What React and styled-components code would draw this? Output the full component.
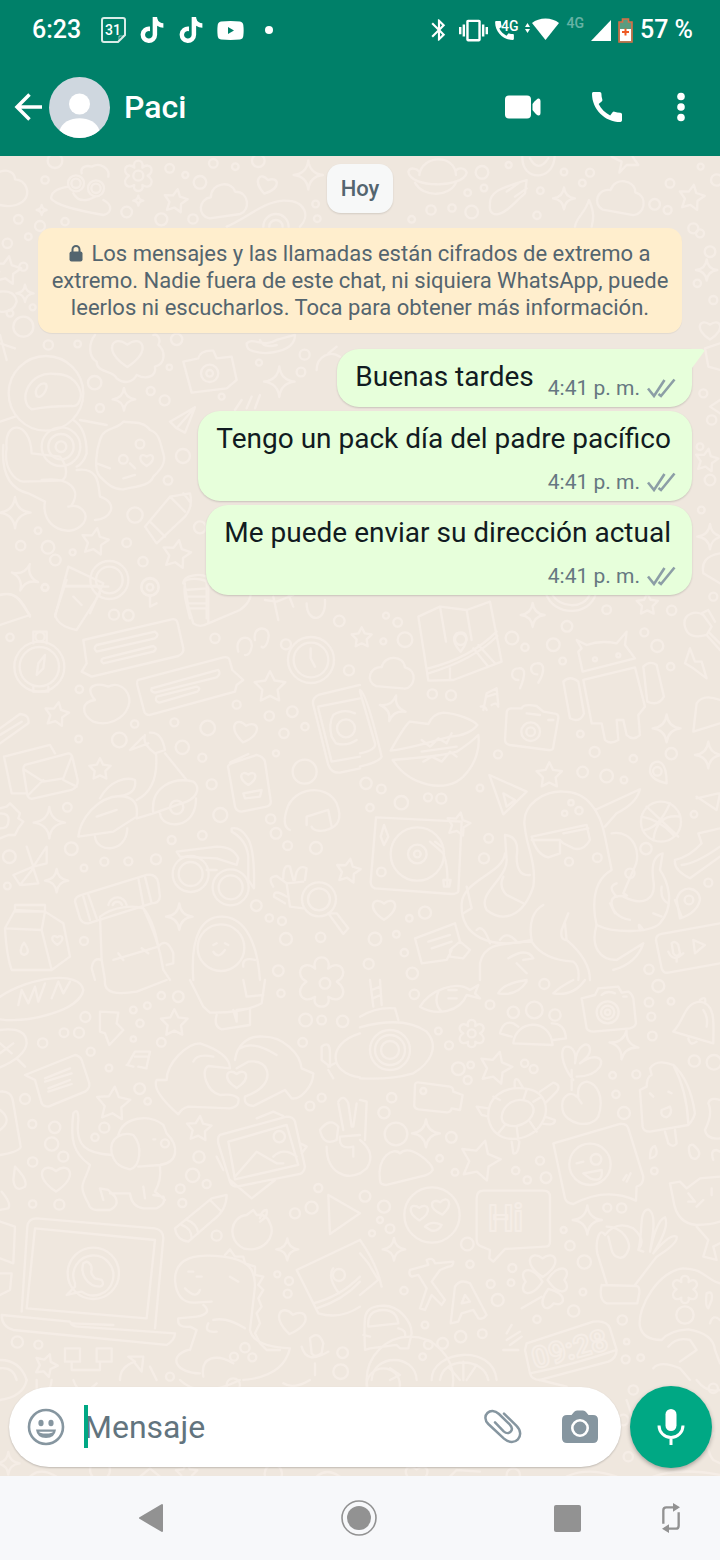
import React, { useState } from 'react';
import styled, { createGlobalStyle } from 'styled-components';
import { FaTiktok } from 'react-icons/fa6';
import { MdBluetooth, MdCall, MdVibration } from 'react-icons/md';

const GlobalStyle = createGlobalStyle`
  * {
    box-sizing: border-box;
  }

  body {
    margin: 0;
    font-family: Roboto, 'Noto Sans', sans-serif;
  }

  button {
    padding: 0;
    border: none;
    background: none;
    color: inherit;
    font: inherit;
    cursor: pointer;
  }

  svg {
    display: block;
    flex-shrink: 0;
  }
`;

const Screen = styled.div`
  display: flex;
  flex-direction: column;
  min-height: 100vh;
`;

const TopArea = styled.header`
  background-color: #008069;
  color: #fff;
`;

/* ---------- status bar ---------- */

const StatusBar = styled.div`
  display: flex;
  justify-content: space-between;
  align-items: center;
  height: 58px;
  padding: 2px 27px 0 32px;
`;

const StatusGroup = styled.div`
  display: flex;
  align-items: center;
  gap: ${({ $gap }) => $gap}px;
`;

const StatusText = styled.span`
  font-size: 25px;
  font-weight: 500;
  line-height: 30px;
`;

const Clock = styled(StatusText)`
  margin-right: 7px;
`;

const Network = styled.span`
  align-self: flex-start;
  font-size: 14px;
  font-weight: 500;
  line-height: 16px;
  opacity: ${({ $faded }) => ($faded ? 0.4 : 1)};
`;

const CallNetwork = styled.div`
  display: flex;
  margin-left: -3px;

  ${Network} {
    margin-left: -16px;
  }
`;

/* ---------- chat header ---------- */

const ChatHeader = styled.div`
  display: flex;
  align-items: center;
  height: 98px;
  padding: 0 7px 0 14px;
`;

const Contact = styled.button`
  display: flex;
  flex: 1;
  align-items: center;
  gap: 14px;
  margin-left: 7px;
`;

const Name = styled.h1`
  margin: 0;
  font-size: 32px;
  font-weight: 500;
  line-height: 40px;
`;

const Actions = styled.div`
  display: flex;
  align-items: center;
  gap: ${({ $gap }) => $gap || 0}px;
`;

const IconButton = styled.button`
  display: flex;
  justify-content: center;
  align-items: center;
  width: ${({ $width }) => $width || 48}px;
  height: 48px;
`;

/* ---------- conversation ---------- */

const ChatArea = styled.main`
  position: relative;
  display: flex;
  flex: 1;
  flex-direction: column;
  background-color: #efe7de;
  overflow: hidden;
`;

const WallpaperSvg = styled.svg`
  position: absolute;
  inset: 0;
  width: 100%;
  height: 100%;
`;

const Conversation = styled.section`
  position: relative;
  display: flex;
  flex: 1;
  flex-direction: column;
  align-items: center;
  padding: 8px 28px 0;
`;

const DateChip = styled.div`
  padding: 11px 14px 10px;
  border-radius: 14px;
  background-color: #f7f8f8;
  box-shadow: 0 1px 2px rgba(0, 0, 0, 0.12);
  color: #54656f;
  font-size: 22px;
  font-weight: 500;
  line-height: 28px;
`;

const Notice = styled.p`
  align-self: stretch;
  margin: 15px 10px 16px;
  padding: 12px 10px;
  border-radius: 14px;
  background-color: #ffeecd;
  box-shadow: 0 1px 1px rgba(0, 0, 0, 0.06);
  color: #54656f;
  font-size: 22px;
  line-height: 27px;
  text-align: center;
  white-space: nowrap;

  svg {
    display: inline-block;
    margin-right: 8px;
    vertical-align: -2px;
  }
`;

const Messages = styled.div`
  display: flex;
  flex-direction: column;
  align-items: flex-end;
  align-self: stretch;
  gap: 4px;
`;

const Bubble = styled.article`
  position: relative;
  display: flex;
  flex-direction: ${({ $stacked }) => ($stacked ? 'column' : 'row')};
  align-items: flex-end;
  gap: 8px;
  padding: 11px 15px 7px 18px;
  border-radius: 22px;
  border-top-right-radius: ${({ $tail }) => ($tail ? 0 : 22)}px;
  background-color: #e7ffdb;
  box-shadow: 0 1px 2px rgba(0, 0, 0, 0.16);
`;

const Tail = styled.svg`
  position: absolute;
  top: 0;
  left: 100%;
`;

const MessageText = styled.p`
  align-self: flex-start;
  margin: 0 6px 6px 0;
  color: #111b21;
  font-size: 28px;
  line-height: 34px;
`;

const Meta = styled.div`
  display: flex;
  align-items: center;
  gap: 7px;
  color: #667781;
  font-size: 21px;
  line-height: 24px;
`;

/* ---------- composer ---------- */

const Composer = styled.form`
  position: relative;
  display: flex;
  align-items: center;
  gap: 9px;
  padding: 0 8px 8px 9px;
`;

const Field = styled.div`
  display: flex;
  flex: 1;
  align-items: center;
  height: 80px;
  padding: 0 17px 0 13px;
  border-radius: 40px;
  background-color: #fff;
  box-shadow: 0 1px 2px rgba(0, 0, 0, 0.2);
  color: #8696a0;
`;

const InputWrap = styled.div`
  position: relative;
  flex: 1;
  min-width: 0;
  margin-left: 14px;
`;

const Input = styled.input`
  width: 100%;
  height: 44px;
  padding: 0;
  border: none;
  outline: none;
  background: none;
  color: #111b21;
  font-family: inherit;
  font-size: 32px;

  &::placeholder {
    color: #62747e;
    opacity: 1;
  }
`;

const Caret = styled.span`
  position: absolute;
  top: 0;
  left: 0;
  width: 4px;
  height: 43px;
  background-color: #00a884;
`;

const MicButton = styled.button`
  display: flex;
  justify-content: center;
  align-items: center;
  width: 82px;
  height: 82px;
  border-radius: 50%;
  background-color: #00a884;
  box-shadow: 0 2px 4px rgba(0, 0, 0, 0.3);
`;

/* ---------- navigation bar ---------- */

const NavBar = styled.nav`
  display: grid;
  grid-template-columns: 208fr 208fr 104fr 48px;
  align-items: center;
  height: 84px;
  padding: 0 25px 0 127px;
  background-color: #f7f8fa;
  color: #929292;
`;

/* ---------- wallpaper ---------- */

const STAR = 'M0 -10L3 -4L10 -3L5 2L6 9L0 6L-6 9L-5 2L-10 -3L-3 -4Z';
const SPARKLE = 'M0 -10Q1 -1 10 0Q1 1 0 10Q-1 1 -10 0Q-1 -1 0 -10Z';
const HEART = 'M0 9C-16 -1 -9 -12 0 -5C9 -12 16 -1 0 9Z';
const CLOUD = 'M-8 7C-14 5 -12 -3 -6 -3C-5 -10 5 -10 6 -4C13 -3 12 6 7 7Z';
const FLOWER = 'M-3 -6C-5 -13 5 -13 3 -6C9 -11 13 -3 7 0C13 4 9 11 3 7C5 13 -5 13 -3 7C-9 11 -13 4 -7 0C-13 -3 -9 -11 -3 -6Z';

// Every panel is drawn on a grid three times finer than the page.
const panels = [
  {
    x: 0,
    y: 150,
    circles: [[135, 90, 11], [55, 208, 13], [195, 215, 11], [380, 186, 16], [509, 55, 13], [600, 97, 19], [556, 75, 9], [640, 40, 13], [706, 50, 10], [775, 32, 19], [484, 208, 18], [579, 207, 14], [947, 162, 10], [952, 206, 10], [120, 228, 15], [165, 32, 22], [415, 77, 15], [228, 100, 14], [288, 115, 14], [228, 100, 24], [288, 115, 24]],
    shapes: [[STAR, 527, 152, 3.5, 10], [SPARKLE, 925, 75, 4.4], [HEART, 800, 105, 3, 15], [FLOWER, 415, 77, 4], [CLOUD, 672, 155, 6.2, -8], [SPARKLE, 125, 180, 1.5], [SPARKLE, 415, 152, 1.5]],
    paths: [
      'M0 65C25 55 45 70 45 88C78 90 95 130 68 155Q40 175 0 165',
      'M245 70C240 50 260 45 275 50C300 35 330 55 325 80M205 110C180 115 155 120 153 145C170 170 280 190 310 195C335 190 340 165 310 150M220 130Q240 165 285 140',
      'M680 230C740 205 790 155 850 152C920 150 930 200 900 230M790 230A38 38 0 1 1 866 230M808 230A20 20 0 1 1 848 230',
    ],
  },
  {
    x: 360,
    y: 150,
    circles: [[366, 67, 19], [372, 114, 10], [323, 128, 10], [213, 180, 14], [276, 174, 11], [335, 186, 19], [155, 208, 10], [612, 66, 10], [690, 68, 12], [667, 99, 10], [541, 122, 10], [531, 196, 11], [884, 163, 16], [923, 180, 12], [930, 100, 13], [1022, 50, 9], [1070, 90, 17], [446, 45, 9], [1000, 235, 15]],
    shapes: [[SPARKLE, 612, 145, 3.3], [CLOUD, 785, 145, 6.2, 10], [STAR, 995, 142, 3.8, 10]],
    paths: [
      'M178 75C185 15 285 10 288 75M145 65C150 115 310 115 320 68C315 50 290 55 290 60M145 65C150 50 170 55 178 65M165 98C190 145 270 140 288 98',
      'M390 165C385 120 440 110 500 90L495 130C470 150 440 190 410 193C392 193 388 180 390 165M440 125L475 100M465 140L500 115',
      'M487 20C485 95 580 95 584 20M510 25Q535 70 565 25',
      'M755 20L785 35L778 68L800 45L835 45L818 20M645 230C650 200 675 190 687 150C705 190 700 210 695 230',
    ],
  },
  {
    x: 0,
    y: 320,
    circles: [[138, 220, 112], [145, 75, 14], [233, 72, 10], [530, 58, 17], [284, 188, 20], [452, 213, 12], [494, 241, 15], [300, 264, 12], [508, 142, 8], [914, 104, 15], [903, 156, 13], [777, 128, 9], [629, 160, 26], [629, 160, 10], [549, 408, 21], [504, 481, 13], [405, 585, 23], [600, 622, 18], [144, 682, 19], [62, 677, 14], [166, 720, 16], [218, 697, 9], [380, 668, 13], [429, 725, 14], [135, 803, 10], [450, 802, 26], [450, 802, 10], [114, 632, 10], [328, 780, 57], [328, 780, 40], [183, 380, 58], [183, 380, 38], [183, 380, 16], [370, 418, 13], [420, 372, 13], [665, 230, 9]],
    shapes: [[SPARKLE, 838, 185, 4.6], [SPARKLE, 372, 238, 3.4], [SPARKLE, 45, 578, 4.7], [SPARKLE, 75, 772, 4.2, 20], [STAR, 285, 664, 4, 10], [STAR, 530, 702, 4.2, 10], [HEART, 382, 98, 4.8], [HEART, 440, 420, 2]],
    paths: [
      'M95 268C50 240 90 150 165 162C220 160 240 200 243 225Q238 262 215 258Q150 258 95 268M110 228C100 205 125 185 138 192C145 205 125 240 110 228',
      'M285 45C265 70 265 110 290 125C290 160 340 150 350 175C375 195 400 185 410 165C440 180 470 170 465 140C500 130 495 90 475 75C485 55 470 40 460 45',
      'M550 125L595 115Q600 90 640 92L650 115L695 110L710 180L680 205L575 218Z',
      'M20 385C10 300 90 300 95 400L180 410C205 440 205 485 175 482L70 485C40 480 10 440 20 385M10 375Q0 500 85 520L135 545M125 480C210 470 245 510 215 555M230 450C300 440 295 500 300 530C360 550 330 600 285 600M135 545C120 620 210 660 250 610C270 580 240 550 205 560',
      'M0 305L45 290M220 300Q260 325 260 400Q250 430 230 440M240 300L320 315',
      'M300 360C310 320 350 330 370 305C390 310 430 300 450 330C480 340 480 370 490 400C500 430 480 450 460 470C450 500 400 500 370 508C340 510 320 490 300 470C280 450 290 390 300 360M290 430L330 445M390 430L405 445M370 475L405 465',
      'M435 620L510 530L570 520Q580 560 555 590L470 670ZM510 530L555 575M450 605L495 650M550 520L570 545',
      'M510 305L585 262L555 338L530 325ZM530 325L585 262M705 270L725 240M740 265L755 230M765 265L780 225',
      'M740 70C760 50 790 85 830 60L885 45C885 95 800 110 750 90Q740 85 740 70M780 60Q790 85 830 75M950 150C950 110 990 90 1020 110M985 100L1010 80',
      'M205 740L310 790L270 880M205 740L165 890M190 798L325 800M450 830V860L470 850',
      'M550 790C550 765 600 760 620 770M555 790C550 830 560 850 570 895M555 810L620 805M560 850L620 850M620 770V895M0 825C50 810 70 850 90 890M0 45L20 120',
    ],
  },
  // Margins beside the encryption notice and the messages.
  {
    x: 0,
    y: 230,
    circles: [[22, 40, 14], [85, 20, 10], [70, 110, 12], [30, 250, 10], [98, 232, 9], [70, 290, 30]],
    shapes: [[STAR, 20, 120, 4.2, 10], [SPARKLE, 75, 190, 2.6]],
    paths: ['M0 185Q45 180 50 215Q40 250 0 245M0 340L45 355'],
  },
  {
    x: 690,
    y: 220,
    circles: [[30, 40, 12], [60, 95, 16], [22, 190, 11], [70, 240, 12], [40, 520, 12], [65, 600, 14], [30, 680, 10], [60, 780, 16], [34, 870, 10], [70, 1130, 12]],
    shapes: [[SPARKLE, 50, 150, 3.2], [HEART, 60, 330, 3.2], [STAR, 50, 720, 3.4, 10], [SPARKLE, 60, 950, 3.8]],
    paths: ['M90 370L45 385L55 440L90 450M90 1000Q30 1010 40 1060L90 1090M90 540L60 560L90 580'],
  },
  {
    x: 0,
    y: 580,
    circles: [[135, 22, 10], [30, 172, 11], [342, 104, 15], [385, 106, 16], [645, 175, 14], [1018, 123, 16], [858, 193, 15], [1047, 271, 15], [877, 395, 16], [808, 408, 14], [710, 374, 12], [623, 444, 22], [852, 460, 14], [547, 502, 20], [523, 427, 12], [358, 480, 22], [404, 432, 11], [236, 477, 10], [607, 533, 12], [635, 613, 15], [661, 705, 21], [828, 520, 9], [202, 682, 13], [214, 806, 19], [28, 830, 19], [252, 864, 10], [313, 845, 12], [385, 844, 12], [468, 838, 15], [515, 780, 12], [607, 766, 13], [812, 717, 14], [828, 760, 16], [863, 797, 13], [948, 804, 18], [769, 977, 16], [808, 1014, 11], [846, 1023, 12], [858, 1077, 18], [962, 1072, 14], [252, 1083, 12], [835, 1172, 16], [238, 328, 11], [915, 440, 11], [118, 260, 75], [118, 260, 59], [933, 240, 69], [933, 240, 52], [572, 882, 54], [572, 882, 36], [692, 922, 54], [692, 922, 36], [957, 958, 51], [957, 958, 33], [663, 1103, 70], [120, 170, 14], [914, 575, 36], [530, 682, 20], [22, 918, 10], [450, 20, 26], [1038, 445, 27]],
    shapes: [[STAR, 170, 402, 3.6, 10], [STAR, 810, 320, 4.6], [STAR, 300, 567, 3.2], [STAR, 1045, 872, 3.6, 10], [SPARKLE, 148, 728, 4.7], [SPARKLE, 170, 902, 3.5], [SPARKLE, 538, 1010, 4], [HEART, 735, 455, 3.6, 10], [HEART, 745, 595, 2.2], [HEART, 172, 1080, 1.6]],
    paths: [
      'M100 190V155H140V190M100 320V335H145V320M110 285L115 250L135 225L130 265Z',
      'M250 180L515 118Q530 115 533 130L550 205Q552 220 535 228L275 290L245 275L260 250Z',
      'M290 195L465 155Q480 165 465 175L290 215Q278 205 290 195M310 235L460 198Q475 205 460 215L310 250Q298 242 310 235',
      'M415 300L670 232Q688 228 690 245L697 270L730 300L710 315L705 335L450 405Q435 405 432 392L412 315Q410 302 415 300M455 325L655 270Q665 280 650 292L465 338Q450 335 455 325M470 350L590 320Q605 325 592 335L478 368Q462 362 470 350',
      'M285 360C245 310 300 310 325 320C365 300 400 345 385 380C370 420 320 440 280 425C240 400 245 365 285 360',
      'M0 445L60 402Q90 405 85 430L0 490M0 465L65 425M0 45C60 30 65 80 90 105L0 135',
      'M200 0L165 105Q175 140 230 150L300 40M190 18H300M220 50L245 75',
      'M550 10C550 -10 620 -5 625 10V130M555 20L565 80L580 130Q600 145 625 130L720 90Q760 60 750 30M560 50L620 50M565 85H620',
      'M715 215C700 165 760 160 755 200C750 230 735 225 735 225M765 180C755 135 815 135 805 175C800 205 785 205 785 200M932 205V235L945 260',
      'M12 530L150 495L165 520M12 530L35 640L80 640M75 555L205 520Q215 520 218 535L233 600Q235 620 215 630L95 657Q85 655 82 645L70 570Q70 558 75 555M75 570L130 605L190 595L215 530M85 645L130 600M190 600L230 620',
      'M940 375Q935 355 955 345L1080 315M940 375L985 555Q995 580 1020 578L1080 565M955 380L1080 355M955 385L995 545L1080 530',
      'M1000 405Q1030 385 1065 400M1000 405Q985 430 995 470L1008 490Q1040 500 1070 480',
      'M235 770C240 720 290 650 360 648C400 650 415 670 410 710L340 755ZM300 655C330 600 380 590 405 600C410 630 390 645 360 648M285 770C290 820 380 820 382 745M290 710L350 690M410 660C450 640 475 600 468 520M495 520L560 600M410 715L460 700M460 700C450 620 520 590 580 605C600 620 595 650 560 665ZM480 700C485 750 590 750 588 655M435 465Q425 490 465 520L495 510Q485 455 450 458M430 470L390 510L445 490',
      'M685 565Q680 555 700 548L770 525Q790 530 795 545L812 660Q815 675 800 680L725 695Q710 695 705 680ZM690 548L745 522M730 640L785 630L780 650L735 655Z',
      'M870 750Q845 740 860 690C880 620 980 610 1010 670C1030 720 1010 740 985 748C970 755 940 755 935 740M920 735V710L985 690L995 740',
      'M530 815L650 800Q700 800 715 835L710 855L650 835L540 830ZM695 745Q720 740 740 770Q765 800 762 925L745 900V830Q740 780 695 755ZM620 870H650',
      'M80 800L100 860L140 800L140 850L100 860L40 885L60 915L100 865L115 910L65 915',
      'M225 965Q225 950 245 945L440 885Q470 880 475 910L480 950Q478 970 455 970L265 1030Q245 1030 240 1015ZM415 895L430 975M435 890L455 970M250 950L270 1020M265 945L290 1015M325 975A28 28 0 0 1 380 975M338 975A15 15 0 0 1 366 975',
      'M300 1010C340 980 400 975 430 985Q460 1020 475 1100L340 1140M300 1010L305 1140L315 1200M430 985C460 1050 480 1100 490 1170L510 1200M475 1100Q500 1070 520 1120V1150L500 1155M305 1140Q280 1130 275 1165L285 1200M355 1120L370 1140M425 1105L445 1120',
      'M15 1045L45 990L135 995L190 1030L210 1130L155 1170L35 1170Q20 1130 15 1045M15 1045L125 1050L155 1170M125 1050L135 995M45 975H135V995H45ZM72 1088Q95 1120 72 1125Q52 1120 72 1088',
      'M580 1200C570 1060 610 1010 665 1010C720 1010 770 1060 780 1200M730 1160Q725 1130 765 1140M640 1115Q655 1140 675 1110M640 1095L650 1090M675 1090L685 1095',
      'M820 920Q800 890 830 888L860 910M850 895Q850 850 870 860L880 900M885 900Q890 850 920 865L915 900M860 910L910 905M860 910L870 980L910 985M860 950Q820 925 822 950L855 970M985 1000L1010 1000L1045 1045L1030 1062Z',
      'M0 685L20 680L30 670L45 685L60 700L55 715L70 725L55 745L45 765L25 765L0 775M0 700Q30 700 25 725Q25 745 0 745',
      'M820 50L835 120M795 60L830 65L880 45M860 30L880 80M920 70C920 130 980 130 975 60',
    ],
  },
  {
    x: 360,
    y: 580,
    circles: [[78, 107, 9], [113, 127, 13], [70, 184, 9], [135, 179, 22], [456, 174, 19], [495, 202, 11], [580, 194, 19], [621, 139, 16], [740, 89, 13], [935, 91, 14], [608, 243, 10], [853, 157, 12], [892, 198, 18], [932, 260, 11], [217, 342, 14], [273, 346, 15], [704, 516, 15], [661, 462, 10], [414, 523, 12], [820, 536, 11], [934, 521, 17], [668, 576, 16], [740, 588, 19], [792, 600, 10], [18, 610, 17], [64, 627, 13], [124, 668, 20], [204, 652, 12], [244, 656, 15], [360, 624, 10], [30, 683, 11], [892, 574, 13], [512, 455, 28], [512, 455, 13], [903, 725, 60], [172, 822, 80], [172, 822, 28], [172, 822, 10], [64, 876, 13], [386, 775, 13], [372, 835, 15], [858, 806, 17], [627, 845, 12], [712, 833, 13], [195, 998, 18], [45, 1077, 19], [109, 1063, 10], [133, 1118, 11], [26, 1152, 15], [157, 1180, 17], [148, 1015, 10], [1045, 908, 12], [987, 960, 13], [867, 1168, 14], [302, 178, 17], [614, 700, 8], [657, 692, 11], [633, 668, 8], [1002, 703, 10], [810, 880, 14], [705, 238, 6], [775, 226, 6]],
    shapes: [[SPARKLE, 518, 105, 3.6], [SPARKLE, 98, 385, 4, 15], [SPARKLE, 920, 445, 4.2], [SPARKLE, 1045, 525, 4], [STAR, 862, 72, 3.2], [STAR, 568, 585, 3.8], [STAR, 295, 732, 3.5, 12], [CLOUD, 98, 282, 5.8, 5], [HEART, 72, 988, 3.5], [STAR, 5, 172, 3]],
    paths: [
      'M175 110L240 80L320 90L390 65L425 245L280 300L205 302ZM240 80L258 185M320 90L335 180M205 265Q330 235 410 155M205 280Q340 240 412 168M340 205L385 260M355 195L405 250M270 265V300M302 215Q270 180 290 160Q320 150 320 180Q315 200 302 215',
      'M558 40C580 110 690 110 708 40M575 40C595 85 675 90 690 40',
      'M668 275L655 215L665 205L650 180L680 195Q720 180 770 190L800 155L795 195L825 235ZM670 300L825 262L855 380L835 405L840 465Q820 485 800 465L790 420L770 420L775 480Q750 495 735 480L725 430L695 430ZM610 305Q630 285 655 305L672 400Q660 430 630 415ZM850 260Q870 240 890 255L912 350Q895 380 862 365Z',
      'M480 325C495 290 500 262 475 265C450 265 450 300 475 300M535 308C555 275 555 247 530 250C505 252 510 285 532 283',
      'M370 390L380 340L410 325L415 375M380 350L412 340M362 380Q375 375 380 390M395 375Q410 365 415 380',
      'M440 400Q440 385 455 385L485 385Q490 370 530 378L550 395L580 400Q597 400 595 415L580 500Q580 512 565 510L450 495Q435 492 435 480ZM500 400L540 405M565 420H580',
      'M92 512C110 480 140 430 150 425L205 432Q220 400 250 398C290 400 340 420 352 435Q330 465 270 470C200 490 120 510 92 512M98 540C150 620 260 640 310 590C350 550 360 500 355 465Q330 490 290 515C240 530 150 535 98 540M185 480L210 500L235 475L260 490L275 460M190 545L215 530L245 545L270 515L290 530M185 515L290 500',
      'M975 140C965 100 1010 90 1030 105L1055 140L1040 165Q985 180 975 140M1025 100L1045 90L1065 125M1050 160L1080 190M1040 165L1080 210M990 205L975 250L1000 265L1040 295L1025 245L1005 245Z',
      'M1000 455L1010 370Q1030 340 1080 360M1000 455L1080 430M870 575Q870 545 895 545Q920 550 920 610Q875 600 870 575',
      'M388 585L500 635L430 703ZM430 640L465 660L440 680Z',
      'M1010 650L1070 690L1080 640M1010 655L1075 640M945 840Q990 830 1025 790L1015 760L1080 745M945 840Q940 870 990 895L1080 830M965 855Q1010 850 1080 800M950 960C960 910 1020 920 1020 960Q1010 1000 960 1015ZM945 960L965 1010',
      'M860 680L955 770M855 750Q900 740 930 670M880 780Q890 700 960 710M845 710Q900 720 940 765',
      'M48 712L305 725L295 935Q290 942 275 942L45 925Q32 920 32 905ZM210 785L250 820Q265 860 262 915M225 785L245 800M72 735L85 770L72 795L62 770ZM250 900H272L268 920H252Z',
      'M495 745C480 670 560 630 610 635C680 635 720 690 735 770L755 870C720 890 695 930 705 1010L710 1035C760 1060 870 1060 900 1030C950 970 920 900 900 870L908 820Q870 830 880 900C890 960 850 980 790 950M495 745C500 800 530 850 520 920C490 1010 430 1030 380 990C350 940 440 900 440 840L435 765Q480 770 470 830Q470 890 510 885M435 820C430 880 310 900 305 970C300 1070 390 1110 515 1080M515 770L540 765L680 735L690 780Q670 815 640 805L610 790L600 780L600 820L565 832Q530 825 515 770M705 690L840 628Q830 670 770 700L735 740M755 760C820 750 850 820 820 870L790 940C830 960 750 930 755 970Q760 1010 810 1020M430 890Q415 920 440 945L490 970M515 780H600M610 760L685 745',
      'M515 1080C505 1030 520 990 550 975M360 1150C370 1100 400 1090 515 1085M360 1150V1200M515 1085Q550 1140 640 1145Q660 1160 655 1200M605 1050L625 1000M605 1050Q600 1080 620 1080L615 1030M710 1035C690 1100 720 1140 770 1140L850 1090Q830 1150 760 1170M620 1080Q690 1140 690 1200M445 1135Q500 1100 520 1135L490 1140M470 1150L500 1180',
      'M320 920L335 985L310 1000M350 1050Q370 1030 390 1090M420 1080Q440 1050 470 1085M770 910Q740 920 770 950M750 970L765 1000M905 920Q900 960 925 970M880 1000L905 1010M840 1050Q830 1020 850 1050',
      'M165 1075L285 1030L300 1085M165 1075L185 1150L260 1140L275 1110M205 1085L270 1065M215 1105L275 1085M270 1110L300 1085L330 1110L310 1135L270 1130Z',
      'M1080 1030L905 1062Q888 1065 888 1080L905 1165Q910 1180 925 1178L1080 1150M935 1090Q945 1080 955 1095L960 1120Q950 1135 940 1120ZM925 1115Q940 1150 970 1120M950 1135V1145M1000 1080L1035 1095L1005 1120Z',
      'M0 335L45 490Q50 510 0 520M0 330Q20 340 65 530Q60 545 0 560',
    ],
  },
  {
    x: 0,
    y: 980,
    circles: [[484, 47, 11], [535, 50, 16], [256, 111, 15], [192, 158, 13], [237, 158, 15], [128, 189, 14], [400, 90, 10], [442, 77, 10], [420, 130, 11], [484, 187, 13], [272, 215, 12], [327, 264, 10], [419, 326, 16], [443, 364, 10], [75, 357, 15], [97, 432, 12], [164, 442, 17], [155, 492, 20], [190, 530, 15], [98, 546, 14], [313, 443, 15], [285, 472, 11], [597, 531, 17], [578, 586, 20], [620, 612, 12], [541, 626, 13], [547, 669, 12], [98, 672, 11], [178, 674, 15], [650, 767, 15], [955, 624, 12], [935, 683, 18], [885, 700, 15], [930, 378, 13], [965, 353, 12], [917, 120, 19], [965, 120, 13], [1028, 124, 17], [908, 187, 13], [52, 1086, 17], [115, 1094, 12], [735, 1103, 14], [702, 1130, 12], [757, 1132, 12], [867, 903, 12], [863, 941, 12], [1028, 1118, 16], [1022, 1175, 22], [832, 883, 9], [843, 40, 11], [400, 177, 8], [838, 470, 17], [1017, 885, 18], [510, 1190, 12], [280, 880, 77], [495, 490, 12], [975, 10, 16]],
    shapes: [[STAR, 523, 128, 4], [STAR, 340, 370, 5, 5], [STAR, 597, 445, 3.7, 5], [HEART, 168, 595, 4.4], [HEART, 710, 297, 3], [HEART, 875, 1025, 4.2, 10], [SPARKLE, 862, 808, 3.3], [FLOWER, 965, 5, 6.5], [STAR, 138, 1155, 3.4, 20]],
    paths: [
      'M0 50C90 -10 240 -30 250 30C240 90 90 130 0 118M55 75L65 30L85 70L105 20L115 65L135 10M155 55L175 5L190 40L210 5',
      'M315 0C310 40 350 45 410 35L500 0M570 0L610 80L630 98Q730 100 785 70L795 0M650 105Q640 140 665 148L750 135V85L710 90V125L700 90M730 0L740 50L790 45',
      'M300 95L355 98L350 130L370 150L328 195L315 160L300 155ZM385 250L405 215L450 215L440 260M405 230H445M380 255L400 260M415 260L440 265',
      'M0 150Q80 140 80 190Q75 230 0 262M0 190L35 220M50 235L75 260M0 220L40 190',
      'M75 285L225 225Q240 228 245 240L268 310Q270 325 255 335L145 380Q130 380 125 370L105 300ZM135 295L210 265M135 305L215 280M145 325L210 300M145 335L215 312',
      'M470 300C460 320 475 350 535 403Q545 385 565 380L690 385Q720 380 715 355Q700 340 660 345C620 335 600 270 625 258L690 265Q690 220 600 190C560 190 500 250 500 300ZM580 245Q590 220 640 230M705 240C710 200 740 165 790 170C850 170 900 220 905 265L940 280C940 320 900 360 875 355L855 330L760 378Q730 375 735 350C790 330 810 300 800 270Q790 240 745 245L710 265M720 205Q760 180 830 225',
      'M965 200Q990 180 990 220L990 260L965 240ZM985 270L1000 295M985 260L1005 250M1080 160C980 190 985 280 1080 292',
      'M220 400Q235 380 235 420C225 500 260 520 335 525M220 400C210 480 220 520 270 555C255 610 230 610 265 670Q270 690 290 690H330Q360 675 345 650L325 630L300 625L310 660M330 640H390Q395 680 430 685H470Q500 670 490 650L460 645M435 655L430 620M335 520C325 470 370 455 400 465C430 500 420 560 390 568C350 560 340 540 335 520M355 465C370 410 450 400 490 435L500 460Q530 490 525 520Q520 550 480 555L415 560M480 560Q485 600 465 635L495 660M460 478H466',
      'M660 465L860 410Q880 410 885 425L915 560Q912 578 900 582L710 620Q695 620 690 605L655 490Q652 470 660 465M685 485L860 435L895 555L705 598ZM705 590L770 515L830 550L850 550M820 530Q850 500 890 530M770 415L820 395L850 408M690 600L755 655L825 600M650 530L670 570M900 490L920 500L905 520',
      'M1015 365Q1030 340 1045 370L1055 440M1060 440L1070 370M1015 370L1030 450M960 450Q990 410 1015 440L1010 480Q970 500 960 450M1020 470L1080 465M980 500C980 580 1040 600 1080 580M1020 470Q1015 510 1060 500V530',
      'M0 335Q35 330 40 370L62 500Q60 515 0 525M0 390Q40 420 0 450M45 560Q85 600 75 620Q45 640 40 600ZM5 635Q35 670 25 685L0 690M0 725L45 740L40 850L0 835M0 880L35 880L30 930L0 945',
      'M525 745L635 655L680 645Q680 690 640 720L565 785Q530 780 525 745M560 720Q590 730 595 760M545 735Q575 745 575 775M630 660L660 690',
      'M740 705C690 710 680 780 730 805C790 820 830 770 810 730Q800 700 770 705L760 690ZM780 715Q785 690 800 690Q805 710 780 725',
      'M985 645L1080 700L990 762ZM890 870L1080 780M890 870L955 1000Q1020 1020 1080 980M940 970Q1020 950 1080 890M950 985Q1030 960 1080 905M1017 940Q980 890 1000 865',
      'M65 995L82 740Q85 715 110 715L465 745Q490 750 490 775L465 1045M105 745L465 780L440 1015L80 985ZM5 1005L210 1025Q215 1040 235 1040L525 1060Q525 1080 500 1095L40 1050Q5 1040 5 1005M215 1030L340 1035',
      'M225 920L200 945L245 935A60 60 0 1 0 225 910ZM260 845Q275 850 275 870Q270 880 285 895L305 900Q315 915 300 920C260 920 240 880 250 850Z',
      'M525 900C525 830 590 820 670 830C750 840 765 870 765 920L750 1050Q760 1100 870 1105Q850 1190 730 1200M525 900Q530 970 585 968L635 965M610 975Q640 1000 590 1010L535 1015Q530 1045 570 1040L590 1050L570 1110M565 1110C500 1130 530 1180 600 1180M610 1190C600 1130 650 1120 700 1150M625 1030Q610 1060 650 1055M640 1020Q680 1010 735 1045M565 875H580M590 890H605M555 925Q590 960 600 930M690 890L715 905',
      'M675 825L690 808L705 830L730 830L735 850L765 860L765 885L790 890L775 915L790 930L775 955L785 980L770 1000L780 1030L765 1060L780 1090L800 1110L840 1110',
      'M930 1075Q955 1050 970 1090L965 1120Q945 1135 935 1120ZM905 1100Q920 1155 985 1115M945 1150V1185M195 1105H240V1145H195ZM290 1105H335V1145H290ZM215 1145V1170H300V1145M360 1200Q360 1160 405 1145L385 1130H430L425 1175L405 1150M0 1140Q60 1140 80 1200M0 1165Q40 1160 50 1200M450 1160L470 1200',
    ],
  },
  {
    x: 360,
    y: 980,
    circles: [[163, 43, 14], [390, 74, 13], [553, 12, 15], [895, 18, 18], [867, 67, 13], [933, 64, 10], [874, 110, 12], [235, 153, 10], [267, 196, 12], [295, 266, 19], [332, 255, 10], [323, 300, 12], [494, 250, 11], [521, 267, 12], [758, 286, 10], [829, 283, 12], [792, 399, 18], [768, 343, 11], [95, 353, 14], [72, 398, 17], [274, 472, 16], [239, 535, 10], [285, 577, 10], [540, 542, 12], [467, 572, 11], [502, 600, 11], [558, 593, 16], [15, 649, 16], [72, 680, 18], [60, 720, 9], [90, 746, 13], [36, 760, 9], [322, 792, 19], [330, 853, 11], [457, 864, 12], [453, 908, 10], [392, 912, 12], [413, 960, 18], [611, 750, 9], [630, 797, 14], [673, 846, 20], [742, 683, 12], [785, 684, 14], [641, 993, 17], [669, 936, 10], [787, 1020, 14], [531, 1018, 11], [195, 1035, 10], [302, 1070, 17], [367, 1061, 13], [205, 1094, 13], [248, 1090, 16], [188, 1130, 10], [797, 1138, 12], [842, 1133, 10], [132, 932, 11], [883, 573, 10], [1003, 243, 17], [1062, 247, 22], [877, 168, 13], [90, 210, 60], [90, 210, 45], [90, 210, 27], [335, 160, 12], [216, 705, 83], [690, 553, 62], [708, 538, 16], [743, 97, 33], [743, 97, 20], [743, 97, 8], [523, 90, 25], [460, 97, 17], [585, 105, 17], [108, 462, 34], [975, 1005, 26], [190, 333, 9], [800, 1085, 8]],
    shapes: [[FLOWER, 335, 160, 3.6], [SPARKLE, 792, 195, 4.4, 10], [SPARKLE, 198, 460, 4.2], [SPARKLE, 682, 720, 4.4], [SPARKLE, 102, 808, 3.4], [STAR, 407, 262, 4.8, 15], [STAR, 360, 540, 6, 15], [HEART, 178, 697, 2.7], [HEART, 243, 680, 2.7, -10], [HEART, 548, 855, 4, 0], [HEART, 595, 900, 3.6, 90], [HEART, 515, 905, 3.6, -90], [HEART, 575, 955, 3.3, 160], [FLOWER, 975, 928, 3.6]],
    paths: [
      'M0 142C80 120 150 120 200 155C240 200 210 250 160 280Q90 300 0 295M0 110Q50 80 105 85L115 120M30 0L40 80M60 0L65 75M35 30L60 20M38 55L62 45',
      'M180 80C210 30 290 0 330 30L355 15L345 40L360 55L320 45C300 95 230 110 180 80M235 35Q220 70 245 95M265 30H290M265 55H290M415 40Q430 10 500 0M415 40Q470 50 500 5M580 40Q600 20 640 0M580 40Q640 50 675 0',
      'M460 190C465 120 570 110 578 195ZM420 160Q430 120 460 130L475 140M420 160L455 170M575 130Q615 130 618 175L580 180',
      'M665 55L705 45L715 25L775 20L785 38L805 35Q815 40 820 55L828 130Q825 142 810 145L700 155Q685 155 680 145ZM725 45Q740 30 765 40M790 50H800',
      'M940 155C975 120 970 70 1020 65C1070 70 1060 140 1060 190ZM985 175Q990 200 1010 185M1030 90Q1045 110 1040 140M1020 60Q1040 45 1035 70',
      'M640 300C600 250 600 200 620 200C640 200 650 220 645 250C650 190 690 180 690 210C690 230 670 240 660 250C700 220 735 230 720 260Q700 290 650 290M635 270V330M665 370C650 350 650 340 650 350C630 330 600 350 608 390C615 430 690 450 715 410C735 350 710 310 680 305Q650 310 655 350',
      'M165 315Q165 305 180 308L270 320Q280 322 280 335L308 345L300 390L275 385Q272 398 260 397L175 388Q160 385 163 370Z',
      'M385 415C380 350 430 320 490 325C560 330 570 390 545 430C510 490 400 500 385 415M425 410C430 370 470 350 505 365C540 390 510 430 470 438C440 440 425 430 425 410M465 325Q460 290 475 300L490 325M540 335L580 308Q605 315 590 335L555 370M385 385L350 380L365 405L385 410M555 410L585 420Q585 440 545 430M455 485L460 520Q475 525 478 485M420 360L400 350M435 435L415 460M520 365L545 350M510 425L530 455M470 440L475 480M490 360L500 330',
      'M840 330L860 320Q860 290 875 285L870 265Q890 235 940 255Q990 300 1005 400Q1000 420 985 435L870 455Q850 455 848 440ZM940 255Q980 330 985 430M905 390Q900 410 920 412Q940 400 930 380ZM915 455L925 490Q940 505 950 490L945 450M870 340L880 350M925 335L935 340',
      'M60 600C50 530 100 500 120 520C150 490 220 550 218 570Q210 585 180 590L80 615Q60 615 60 600M0 360L20 365L15 480M0 480Q50 520 20 565L0 580',
      'M580 490L780 432Q800 430 805 445L850 590Q850 615 830 620L828 662Q740 620 640 672Q620 670 615 655ZM650 550L670 545M670 580L725 570Q730 610 690 595ZM790 600L800 585M800 605L812 580M870 535Q870 500 885 498Q900 530 870 535M990 525Q980 490 1000 495Q1030 520 1010 535Q995 540 990 525M1060 540Q1050 510 1070 510L1080 515',
      'M1045 370Q1050 350 1080 360M1045 370Q1060 400 1035 450Q1040 480 1080 475M930 610L960 605L980 625L1020 595L1080 590M930 610L940 660Q950 730 1010 735Q1050 735 1080 725M985 640L1005 665L985 665M1030 660L1010 680M1055 625V645M1010 740L1045 780L1030 830L1070 840L1060 800L1080 790',
      'M370 632H550Q570 632 570 650V785Q570 800 555 800L435 807L400 845L388 835L390 810L365 800Q350 795 350 780V655Q350 632 370 632',
      'M195 740Q215 720 245 735Q235 755 215 752ZM740 910L712 820C705 780 720 740 735 765Q770 720 820 745Q860 780 835 810L850 815M835 810C850 760 835 690 865 688C890 700 880 760 870 815M870 815Q890 720 915 712Q930 740 880 820M880 820Q930 760 950 770Q955 790 890 830L825 915M740 740C790 740 815 790 805 810C790 850 760 830 755 810L745 770M725 915L830 918Q840 920 838 940L832 970H740Q715 960 725 915',
      'M840 1040C830 980 900 870 970 865C1030 865 1040 900 1080 910M840 1040Q850 1080 905 1080Q930 1050 985 1048Q1060 1060 1065 1110L1080 1150M925 1100Q950 1070 990 1080L1010 1110L960 1145M1040 940Q1060 930 1055 960L1045 985Q1035 980 1040 940M1050 1030Q1060 1000 1080 1020M880 1165Q900 1140 960 1165L990 1200',
      'M150 870L205 855L200 840Q220 830 225 850L280 845Q280 860 265 860L240 870L215 905L255 960L245 975L215 945L195 990L180 985L200 925L175 885L155 890Q145 885 150 870',
      'M272 1030L285 920Q300 895 330 910L380 1005Q370 1020 355 1015L340 990L305 1000L295 1025ZM305 970L315 945L330 965Z',
      'M0 820L25 850L55 900L0 945M0 780Q50 850 65 920M15 1110C10 1000 10 985 60 978C120 970 155 1030 155 1060L145 1105H120L110 1095L30 1105ZM25 1040Q20 990 70 990Q110 990 115 1030ZM10 1065L30 1070M115 1045Q140 1050 135 1070',
      'M500 1090L700 1025Q740 1020 750 1045L770 1110Q770 1135 745 1145L540 1200Q515 1200 510 1180L495 1110ZM510 1180Q620 1160 770 1110M440 1060L455 1035M440 1080L480 1055M430 1110H475M450 1095L485 1070M545 950L485 985',
      'M215 1200C215 1110 400 1090 410 1200M240 1200C250 1130 370 1130 385 1200M310 1145V1200M265 1160L300 1200M350 1155L320 1200M35 1200C40 1120 165 1120 170 1200M90 1165L120 1185L90 1200',
    ],
  },
  // Strip behind the composer.
  {
    x: 0,
    y: 1380,
    circles: [[700, 15, 20], [1230, 0, 130], [1150, 15, 50], [1900, 30, 14], [1870, 120, 16], [1885, 230, 14], [2140, 25, 14], [300, 270, 30], [820, 280, 26], [1540, 285, 20]],
    shapes: [[SPARKLE, 25, 250, 3.4], [STAR, 560, 280, 3.2], [HEART, 1250, 285, 3.4]],
    paths: [
      'M0 60Q70 50 80 0M110 0V40Q150 50 155 0M220 0Q240 60 290 10M540 0Q600 60 720 0M850 10Q880 30 930 0M1620 0L1700 20M1880 60L1910 150M2090 0Q2120 40 2160 30M2140 160Q2110 200 2140 240L2160 250',
      'M90 290Q120 260 170 290M420 290L450 265L480 290M950 290Q980 262 1020 290M1350 290L1370 270L1440 275M1700 290Q1760 260 1850 290M1960 290Q2040 262 2160 285',
    ],
  },
];

const Wallpaper = () => (
  <WallpaperSvg
    viewBox="0 156 720 1320"
    preserveAspectRatio="xMidYMin slice"
    fill="none"
    stroke="#f5ede6"
    strokeLinecap="round"
    strokeLinejoin="round"
    aria-hidden="true"
  >
    {panels.map((panel) => (
      <g key={`${panel.x}-${panel.y}`} transform={`translate(${panel.x} ${panel.y}) scale(0.3333)`} strokeWidth="7">
        {panel.circles.map(([cx, cy, r], i) => (
          <circle key={i} cx={cx} cy={cy} r={r} />
        ))}
        {panel.shapes.map(([d, x, y, scale, angle = 0], i) => (
          <path
            key={i}
            d={d}
            transform={`translate(${x} ${y}) rotate(${angle}) scale(${scale})`}
            strokeWidth={7 / scale}
          />
        ))}
        {panel.paths.map((d, i) => (
          <path key={i} d={d} />
        ))}
      </g>
    ))}
    <g fontFamily="Roboto" fontWeight="700" strokeWidth="2">
      <text x="488" y="1231" fontSize="36">Hi</text>
      <text x="535" y="1369" fontSize="30" transform="rotate(-15 535 1369)">09:28</text>
    </g>
  </WallpaperSvg>
);

/* ---------- icons ---------- */

const CalendarIcon = () => (
  <svg width="25" height="26" viewBox="0 0 25 26" fill="none" stroke="#fff" strokeWidth="2">
    <path d="M3 1h19q2 0 2 2v15l-7 7H3q-2 0-2-2V3q0-2 2-2Z" opacity=".85" />
    <path d="M18 24v-5h5" strokeWidth="1" opacity=".5" />
    <text x="12" y="18" textAnchor="middle" fill="#fff" stroke="none" fontSize="14" fontWeight="500">31</text>
  </svg>
);

const YoutubeIcon = () => (
  <svg width="27" height="19" viewBox="0 0 27 19">
    <path d="M4 .5Q13.500 -.5 23 .5Q26 1 26.300 4Q27 9.500 26.300 15Q26 18 23 18.500Q13.500 19.300 4 18.500Q1 18 .7 15Q0 9.500 .7 4Q1 1 4 .5Z" fill="#fff" />
    <path d="M11 6v7l6-3.500Z" fill="#008069" />
  </svg>
);

const DotIcon = () => (
  <svg width="24" height="8" viewBox="0 0 24 8">
    <circle cx="12" cy="4" r="4" fill="#fff" />
  </svg>
);

const WifiIcon = () => (
  <svg width="34" height="24" viewBox="0 0 34 24" fill="#fff">
    <path d="M7 5C14-1 27-1 34 5L20.500 22Z" />
    <path d="M0 9l2.500-4L5 9ZM0 11h5l-2.500 4Z" />
  </svg>
);

const SignalIcon = () => (
  <svg width="20" height="21" viewBox="0 0 20 21">
    <path d="M20 0v21H0Z" fill="#fff" />
  </svg>
);

const BatteryIcon = () => (
  <svg width="15" height="25" viewBox="0 0 15 25">
    <path d="M4.500 1h6v3H14v20H1V4h3.500Z" fill="#5a9c80" stroke="#d96f45" strokeWidth="1.600" />
    <path d="M2 11h11v12H2Z" fill="#fff" />
    <path d="M7.500 10.500v7M4 14h7" stroke="#ee5a24" strokeWidth="2" />
  </svg>
);

const BackArrowIcon = () => (
  <svg width="28" height="28" viewBox="0 0 28 28" fill="none" stroke="#fff" strokeWidth="3.500">
    <path d="M28 14H3M15.500 1.500L3 14l12.500 12.500" />
  </svg>
);

const AvatarIcon = () => (
  <svg width="61" height="61" viewBox="0 0 61 61">
    <circle cx="30.500" cy="30.500" r="30.500" fill="#cfd7df" />
    <circle cx="30.500" cy="27" r="10.500" fill="#fff" />
    <path d="M10.500 53.500C15 37 46 37 50.500 53.500A30.500 30.500 0 0 1 10.500 53.500Z" fill="#fff" />
  </svg>
);

const VideoIcon = () => (
  <svg width="36" height="24" viewBox="0 0 36 24" fill="#fff">
    <rect x="0" y="0.500" width="26" height="23" rx="4" />
    <path d="M27.500 9Q32 3 34 3.500Q35.500 4 35.500 6v12q0 2-1.500 2.500Q32 21 27.500 15Z" />
  </svg>
);

const MoreIcon = () => (
  <svg width="8" height="30" viewBox="0 0 8 30" fill="#fff">
    <circle cx="4" cy="4.500" r="3.800" />
    <circle cx="4" cy="15" r="3.800" />
    <circle cx="4" cy="25.500" r="3.800" />
  </svg>
);

const LockIcon = () => (
  <svg width="14" height="19" viewBox="0 0 14 19">
    <path d="M3.500 9V5.500a3.500 3.500 0 0 1 7 0V9" fill="none" stroke="#54656f" strokeWidth="2" />
    <rect x="0.500" y="7.500" width="13" height="10" rx="2" fill="#54656f" />
  </svg>
);

const TicksIcon = () => (
  <svg width="30" height="20" viewBox="0 0 30 20" fill="none" stroke="#8c9ea6" strokeWidth="2.600" role="img" aria-label="Entregado">
    <path d="M1 10.500l6 7.500L17.500 2M11.500 16l2.500 2L27.500 1.500" />
  </svg>
);

const SmileIcon = () => (
  <svg width="38" height="38" viewBox="0 0 38 38" fill="#8696a0">
    <circle cx="19" cy="19" r="17" fill="none" stroke="#8696a0" strokeWidth="2.600" />
    <ellipse cx="14" cy="15" rx="2.600" ry="3.300" />
    <ellipse cx="24" cy="15" rx="2.600" ry="3.300" />
    <path d="M9 21.500h20q-1 8.500-10 8.500T9 21.500Z" />
    <path d="M12 23.800h14q-.5 1.800-7 1.800t-7-1.800Z" fill="#fff" />
  </svg>
);

const ClipIcon = () => (
  <svg width="40" height="36" viewBox="370 117 120 108" fill="none" stroke="#8696a0" strokeWidth="7.500" strokeLinecap="round">
    <path d="M433 131L470 167C500 197 465 234 433 206L386 162C362 138 392 108 418 132L450 163C466 180 448 198 432 184L406 157" />
  </svg>
);

const CameraIcon = () => (
  <svg width="36" height="34" viewBox="0 0 36 34">
    <path d="M9.500 5L12 2q1-1.500 3-1.500h6q2 0 3 1.500l2.500 3H31q5 0 5 5v18q0 5-5 5H5q-5 0-5-5V10q0-5 5-5Z" fill="#8696a0" />
    <circle cx="18" cy="18" r="7.700" fill="none" stroke="#fff" strokeWidth="2.600" />
  </svg>
);

const MicIcon = () => (
  <svg width="28" height="38" viewBox="0 0 28 38" fill="none" stroke="#fff" strokeWidth="3">
    <rect x="8.500" y="1" width="11" height="22" rx="5.500" fill="#fff" stroke="none" />
    <path d="M2 17.500a12 12 0 0 0 24 0M14 29.500V37" />
  </svg>
);

const NavBackIcon = () => (
  <svg width="26" height="30" viewBox="0 0 26 30">
    <path d="M24 2v26L2 15Z" fill="currentColor" stroke="currentColor" strokeWidth="2" strokeLinejoin="round" />
  </svg>
);

const NavHomeIcon = () => (
  <svg width="36" height="36" viewBox="0 0 36 36">
    <circle cx="18" cy="18" r="17" fill="none" stroke="currentColor" strokeWidth="1.600" />
    <circle cx="18" cy="18" r="12" fill="currentColor" />
  </svg>
);

const NavRecentIcon = () => (
  <svg width="27" height="27" viewBox="0 0 27 27">
    <rect width="27" height="27" rx="2" fill="currentColor" />
  </svg>
);

const NavRotateIcon = () => (
  <svg width="18" height="30" viewBox="908 400 54 90" fill="none" stroke="currentColor" strokeWidth="7">
    <path d="M912 462V422Q912 413 921 413H954M958 428V468Q958 477 949 477H916" />
    <path d="M941 400l21 13-21 13ZM929 464l-21 13 21 13Z" fill="currentColor" stroke="none" />
  </svg>
);

const messages = [
  { id: 1, text: 'Buenas tardes', time: '4:41 p. m.', tail: true },
  { id: 2, text: 'Tengo un pack día del padre pacífico', time: '4:41 p. m.', stacked: true },
  { id: 3, text: 'Me puede enviar su dirección actual', time: '4:41 p. m.', stacked: true },
];

const Message = ({ message }) => (
  <Bubble $stacked={message.stacked} $tail={message.tail}>
    {message.tail && (
      <Tail width="13" height="20" viewBox="0 0 13 20" aria-hidden="true">
        <path d="M0 0H10Q14 1 11 4L0 19Z" fill="#e7ffdb" />
      </Tail>
    )}
    <MessageText>{message.text}</MessageText>
    <Meta>
      <time>{message.time}</time>
      <TicksIcon />
    </Meta>
  </Bubble>
);

const App = () => {
  const [draft, setDraft] = useState('');

  return (
    <>
      <GlobalStyle />
      <Screen>
        <TopArea>
          <StatusBar>
            <StatusGroup $gap={13}>
              <Clock>6:23</Clock>
              <CalendarIcon />
              <FaTiktok size={26} />
              <FaTiktok size={26} />
              <YoutubeIcon />
              <DotIcon />
            </StatusGroup>
            <StatusGroup $gap={7}>
              <MdBluetooth size={26} />
              <MdVibration size={29} />
              <CallNetwork>
                <MdCall size={25} />
                <Network>4G</Network>
              </CallNetwork>
              <WifiIcon />
              <Network $faded>4G</Network>
              <SignalIcon />
              <BatteryIcon />
              <StatusText>57 %</StatusText>
            </StatusGroup>
          </StatusBar>
          <ChatHeader>
            <IconButton type="button" $width={28} aria-label="Atrás">
              <BackArrowIcon />
            </IconButton>
            <Contact type="button">
              <AvatarIcon />
              <Name>Paci</Name>
            </Contact>
            <Actions>
              <IconButton type="button" $width={84} aria-label="Videollamada">
                <VideoIcon />
              </IconButton>
              <IconButton type="button" $width={84} aria-label="Llamar">
                <MdCall size={40} />
              </IconButton>
              <IconButton type="button" $width={64} aria-label="Más opciones">
                <MoreIcon />
              </IconButton>
            </Actions>
          </ChatHeader>
        </TopArea>

        <ChatArea>
          <Wallpaper />
          <Conversation>
            <DateChip>Hoy</DateChip>
            <Notice>
              <LockIcon />
              Los mensajes y las llamadas están cifrados de extremo a
              <br />
              extremo. Nadie fuera de este chat, ni siquiera WhatsApp, puede
              <br />
              leerlos ni escucharlos. Toca para obtener más información.
            </Notice>
            <Messages>
              {messages.map((message) => (
                <Message key={message.id} message={message} />
              ))}
            </Messages>
          </Conversation>

          <Composer onSubmit={(e) => e.preventDefault()}>
            <Field>
              <IconButton type="button" aria-label="Emojis">
                <SmileIcon />
              </IconButton>
              <InputWrap>
                <Input
                  type="text"
                  aria-label="Mensaje"
                  placeholder="Mensaje"
                  value={draft}
                  onChange={(e) => setDraft(e.target.value)}
                />
                {!draft && <Caret />}
              </InputWrap>
              <Actions $gap={29}>
                <IconButton type="button" aria-label="Adjuntar">
                  <ClipIcon />
                </IconButton>
                <IconButton type="button" aria-label="Cámara">
                  <CameraIcon />
                </IconButton>
              </Actions>
            </Field>
            <MicButton type="button" aria-label="Mensaje de voz">
              <MicIcon />
            </MicButton>
          </Composer>
        </ChatArea>

        <NavBar>
          <IconButton type="button" aria-label="Volver">
            <NavBackIcon />
          </IconButton>
          <IconButton type="button" aria-label="Inicio">
            <NavHomeIcon />
          </IconButton>
          <IconButton type="button" aria-label="Recientes">
            <NavRecentIcon />
          </IconButton>
          <IconButton type="button" aria-label="Girar pantalla">
            <NavRotateIcon />
          </IconButton>
        </NavBar>
      </Screen>
    </>
  );
};

export default App;
